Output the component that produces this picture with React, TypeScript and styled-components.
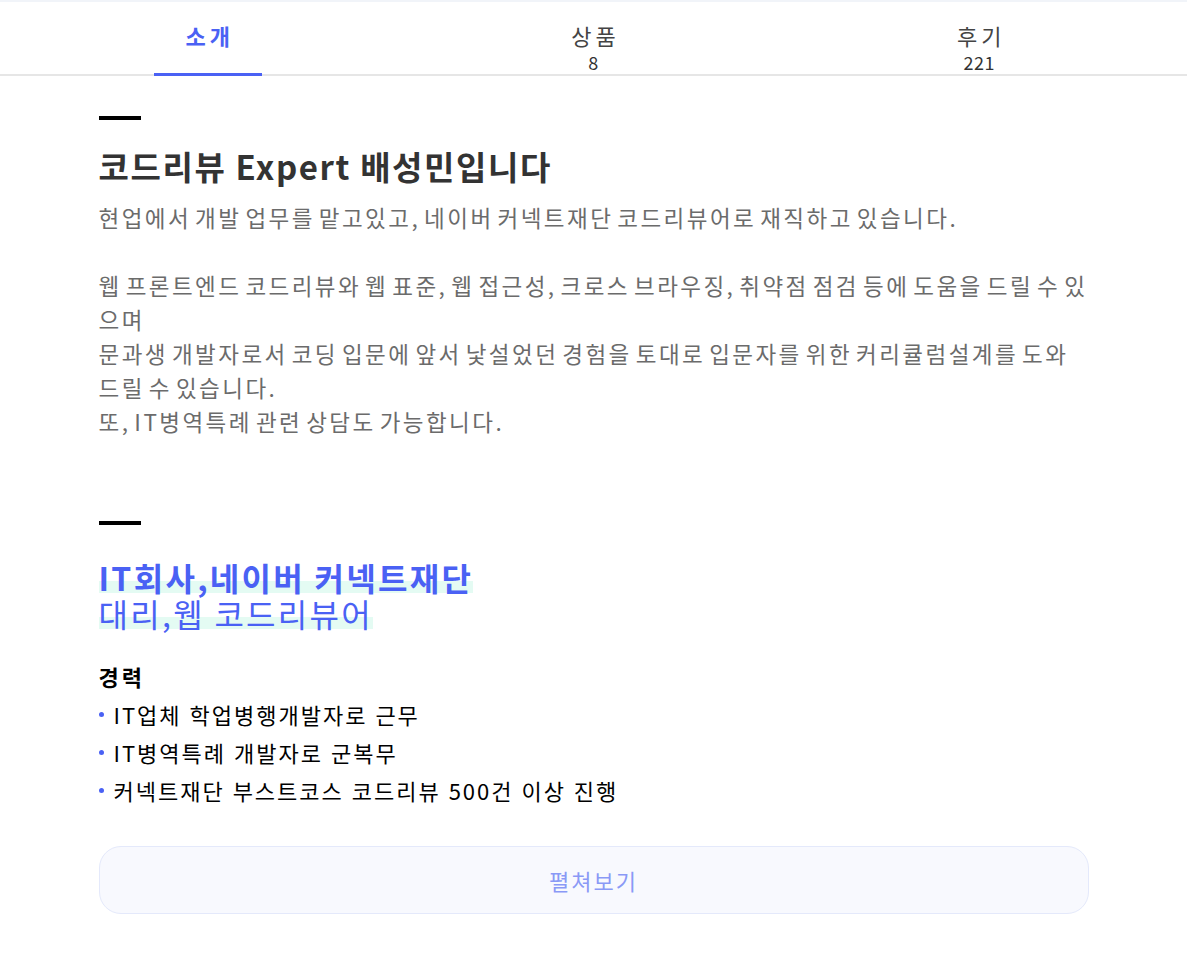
import React from "react";
import styled, { createGlobalStyle } from "styled-components";

const GlobalStyle = createGlobalStyle`
  * { box-sizing: border-box; }
  html, body { margin: 0; padding: 0; background: #ffffff; }
  body { font-family: "Noto Sans CJK KR", "Noto Sans", sans-serif; }
`;

const Page = styled.div`
  width: 100%;
  min-height: 961px;
  border-top: 2px solid #f1f4f9;
`;

const TabBar = styled.nav`
  display: flex;
  padding: 0 15px;
  height: 74px;
  border-bottom: 2px solid #e6e6e6;
`;

const Tab = styled.div<{ $active?: boolean }>`
  flex: 1;
  position: relative;
  display: flex;
  flex-direction: column;
  align-items: center;
  padding-top: 18px;
  color: ${(p) => (p.$active ? "#4a61f4" : "#444")};
  font-weight: ${(p) => (p.$active ? 700 : 400)};
  &::after {
    content: "";
    display: ${(p) => (p.$active ? "block" : "none")};
    position: absolute;
    left: 50%;
    bottom: -2px;
    width: 108px;
    margin-left: -54px;
    height: 3px;
    background: #4a61f4;
  }
`;

const TabLabel = styled.span`
  font-size: 22px;
  line-height: 30px;
  letter-spacing: 4px;
  padding-left: 4px;
`;

const TabCount = styled.span`
  font-size: 18px;
  line-height: 20px;
  margin-top: 2px;
  color: #333;
  letter-spacing: 0.5px;
`;

const Content = styled.main`
  width: 990px;
  margin: 0 auto;
  padding-top: 40px;
`;

const Bar = styled.div`
  width: 42px;
  height: 4px;
  background: #000;
`;

const Section = styled.section`
  display: flex;
  flex-direction: column;
`;

const Heading = styled.h2`
  margin: 26px 0 0;
  font-size: 33px;
  line-height: 40px;
  font-weight: 700;
  color: #333;
  letter-spacing: 1.6px;
`;

const Intro = styled.p`
  margin: 14px 0 0;
  font-size: 22.5px;
  line-height: 34px;
  color: #6b6b6b;
  white-space: pre-line;
  letter-spacing: 2.45px;
  word-spacing: -3.5px;
`;

const Career = styled.section`
  margin-top: 83px;
  display: flex;
  flex-direction: column;
`;

const Titles = styled.div`
  margin-top: 34px;
  display: flex;
  flex-direction: column;
  align-items: flex-start;
`;

const TitleLine = styled.span<{ $bold?: boolean }>`
  font-size: 32px;
  line-height: 36px;
  letter-spacing: 2.3px;
  font-weight: ${(p) => (p.$bold ? 700 : 400)};
  color: #4a61f4;
  background: linear-gradient(transparent 62%, #e4fbf3 62%, #e4fbf3 94%, transparent 94%);
`;

const SubHeading = styled.h3`
  margin: 30px 0 0;
  font-size: 22px;
  line-height: 30px;
  font-weight: 700;
  letter-spacing: 3px;
  color: #000;
`;

const List = styled.ul`
  list-style: none;
  margin: 4px 0 0;
  padding: 0;
  display: flex;
  flex-direction: column;
`;

const Item = styled.li`
  display: flex;
  align-items: center;
  gap: 10px;
  font-size: 22px;
  line-height: 38px;
  letter-spacing: 2px;
  word-spacing: 1px;
  color: #000;
  &::before {
    content: "";
    width: 5px;
    height: 5px;
    border-radius: 50%;
    background: #4a61f4;
    flex: none;
  }
`;

const MoreButton = styled.button`
  margin-top: 37px;
  width: 100%;
  height: 68px;
  border-radius: 22px;
  border: 1px solid #e4e9fb;
  background: #f8f9fe;
  color: #8a99f6;
  font-family: inherit;
  font-size: 22px;
  letter-spacing: 2px;
  cursor: pointer;
`;

export default function App() {
  return (
    <>
      <GlobalStyle />
      <Page>
        <TabBar>
          <Tab $active>
            <TabLabel>소개</TabLabel>
          </Tab>
          <Tab>
            <TabLabel>상품</TabLabel>
            <TabCount>8</TabCount>
          </Tab>
          <Tab>
            <TabLabel>후기</TabLabel>
            <TabCount>221</TabCount>
          </Tab>
        </TabBar>
        <Content>
          <Section>
            <Bar />
            <Heading>코드리뷰 Expert 배성민입니다</Heading>
            <Intro>
              {`현업에서 개발 업무를 맡고있고, 네이버 커넥트재단 코드리뷰어로 재직하고 있습니다.

웹 프론트엔드 코드리뷰와 웹 표준, 웹 접근성, 크로스 브라우징, 취약점 점검 등에 도움을 드릴 수 있으며
문과생 개발자로서 코딩 입문에 앞서 낯설었던 경험을 토대로 입문자를 위한 커리큘럼설계를 도와드릴 수 있습니다.
또, IT병역특례 관련 상담도 가능합니다.`}
            </Intro>
          </Section>
          <Career>
            <Bar />
            <Titles>
              <TitleLine $bold>IT회사,네이버 커넥트재단</TitleLine>
              <TitleLine>대리,웹 코드리뷰어</TitleLine>
            </Titles>
            <SubHeading>경력</SubHeading>
            <List>
              <Item>IT업체 학업병행개발자로 근무</Item>
              <Item>IT병역특례 개발자로 군복무</Item>
              <Item>커넥트재단 부스트코스 코드리뷰 500건 이상 진행</Item>
            </List>
            <MoreButton>펼쳐보기</MoreButton>
          </Career>
        </Content>
      </Page>
    </>
  );
}
